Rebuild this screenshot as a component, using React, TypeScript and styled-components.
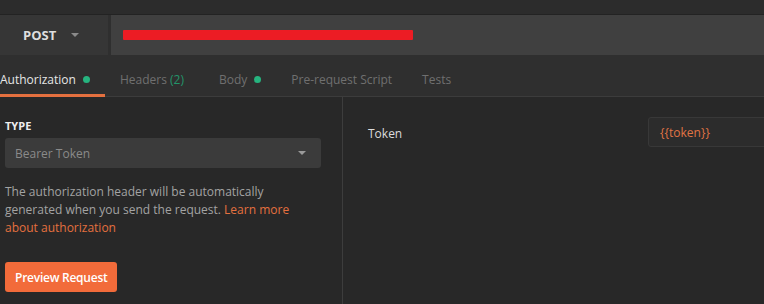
import React from "react";
import styled, { createGlobalStyle } from "styled-components";

const Global = createGlobalStyle`
  html, body { margin: 0; padding: 0; background: #282828; overflow: hidden; }
  * { box-sizing: border-box; }
  body { font-family: "Open Sans", "Noto Sans", sans-serif; }
`;

const Page = styled.div`
  width: 764px;
  height: 304px;
  display: flex;
  flex-direction: column;
  overflow: hidden;
  background: #282828;
`;

const TopStrip = styled.div`
  height: 15px;
  background: #2c2c2c;
  border-bottom: 1px solid #232323;
`;

const UrlRow = styled.div`
  height: 40px;
  display: flex;
  background: #2f2f2f;
  gap: 3px;
`;

const Method = styled.div`
  width: 108px;
  display: flex;
  align-items: center;
  padding-left: 23px;
  gap: 15px;
  background: #363636;
  color: #dedede;
  font-weight: 700;
  font-size: 13px;
`;

const Caret = styled.span<{ $color: string }>`
  width: 0;
  height: 0;
  border-left: 4px solid transparent;
  border-right: 4px solid transparent;
  border-top: 4px solid ${(p) => p.$color};
`;

const UrlInput = styled.div`
  flex: 1;
  display: flex;
  align-items: center;
  padding-left: 12px;
  background: #404040;
`;

const Redaction = styled.span`
  width: 290px;
  height: 10px;
  background: #ec1c24;
  border-radius: 1px;
`;

const TabsRow = styled.div`
  height: 42px;
  display: flex;
  background: #2f2f2f;
  border-bottom: 1px solid #3c3c3c;
  margin-left: -15px;
`;

const Tab = styled.div<{ $active?: boolean; $extra?: number }>`
  display: flex;
  align-items: center;
  gap: 7px;
  padding: 10px ${(p) => 15 + (p.$extra ?? 0)}px 0 15px;
  font-size: 12px;
  color: ${(p) => (p.$active ? "#e6e6e6" : "#6f6f6f")};
  border-bottom: 3px solid ${(p) => (p.$active ? "#e4703f" : "transparent")};
  margin-bottom: -1px;
`;

const Dot = styled.span`
  width: 7px;
  height: 7px;
  border-radius: 50%;
  background: #26b47f;
`;

const Count = styled.span`
  color: #23946a;
`;

const Content = styled.div`
  flex: 1;
  display: flex;
`;

const LeftPanel = styled.div`
  width: 343px;
  padding: 22px 0 0 5px;
  border-right: 1px solid #3d3d3d;
  display: flex;
  flex-direction: column;
  align-items: flex-start;
`;

const Label = styled.div`
  font-size: 11px;
  font-weight: 700;
  color: #eeeeee;
  line-height: 14px;
`;

const Select = styled.div`
  margin-top: 5px;
  width: 316px;
  height: 30px;
  border-radius: 3px;
  background: #3b3b3b;
  display: flex;
  align-items: center;
  justify-content: space-between;
  padding: 0 15px 0 10px;
  font-size: 12px;
  color: #8a8a8a;
`;

const Description = styled.p`
  margin: 15px 0 0;
  width: 316px;
  font-size: 12px;
  line-height: 18px;
  color: #a3a3a3;
`;

const Link = styled.span`
  color: #e4703f;
`;

const Button = styled.button`
  margin-top: 25px;
  height: 30px;
  padding: 0 10px;
  border: none;
  border-radius: 3px;
  background: #f26b3a;
  color: #ffffff;
  font-family: inherit;
  font-size: 12px;
  font-weight: 600;
  letter-spacing: -0.25px;
`;

const RightPanel = styled.div`
  flex: 1;
  overflow: hidden;
  padding: 20px 0 0 25px;
`;

const FieldRow = styled.div`
  display: flex;
  align-items: center;
`;

const FieldLabel = styled.div`
  flex: 0 0 280px;
  font-size: 12px;
  color: #dcdcdc;
  padding-top: 2px;
`;

const FieldInput = styled.div`
  flex: 0 0 240px;
  height: 30px;
  border: 1px solid #383838;
  border-radius: 3px;
  background: #2c2c2c;
  display: flex;
  align-items: center;
  padding-left: 11px;
  font-size: 12px;
  color: #e07445;
`;

export default function App() {
  return (
    <Page>
      <Global />
      <TopStrip />
      <UrlRow>
        <Method>
          POST
          <Caret $color="#8a8a8a" />
        </Method>
        <UrlInput>
          <Redaction />
        </UrlInput>
      </UrlRow>
      <TabsRow>
        <Tab $active>
          Authorization
          <Dot />
        </Tab>
        <Tab $extra={5}>
          <span>
            Headers <Count>(2)</Count>
          </span>
        </Tab>
        <Tab>
          Body
          <Dot />
        </Tab>
        <Tab>Pre-request Script</Tab>
        <Tab>Tests</Tab>
      </TabsRow>
      <Content>
        <LeftPanel>
          <Label>TYPE</Label>
          <Select>
            Bearer Token
            <Caret $color="#9a9a9a" />
          </Select>
          <Description>
            The authorization header will be automatically generated when you send the
            request. <Link>Learn more about authorization</Link>
          </Description>
          <Button>Preview Request</Button>
        </LeftPanel>
        <RightPanel>
          <FieldRow>
            <FieldLabel>Token</FieldLabel>
            <FieldInput>{"{{token}}"}</FieldInput>
          </FieldRow>
        </RightPanel>
      </Content>
    </Page>
  );
}
